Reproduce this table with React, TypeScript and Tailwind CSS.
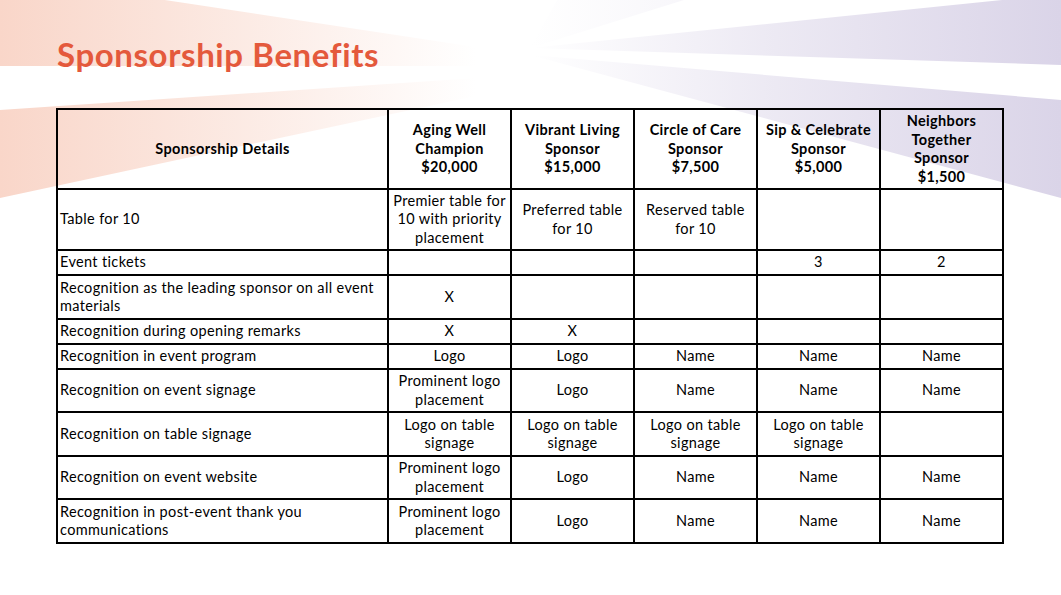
import React from "react";

type Row = {
  label: string;
  h: string;
  cells: string[][];
};

const rows: Row[] = [
  {
    label: "Table for 10",
    h: "h-[61px]",
    cells: [
      ["Premier table for", "10 with priority", "placement"],
      ["Preferred table", "for 10"],
      ["Reserved table", "for 10"],
      [],
      [],
    ],
  },
  { label: "Event tickets", h: "h-[25px]", cells: [[], [], [], ["3"], ["2"]] },
  {
    label: "Recognition as the leading sponsor on all event materials",
    h: "h-[44px]",
    cells: [["X"], [], [], [], []],
  },
  {
    label: "Recognition during opening remarks",
    h: "h-[25px]",
    cells: [["X"], ["X"], [], [], []],
  },
  {
    label: "Recognition in event program",
    h: "h-[25px]",
    cells: [["Logo"], ["Logo"], ["Name"], ["Name"], ["Name"]],
  },
  {
    label: "Recognition on event signage",
    h: "h-[43px]",
    cells: [["Prominent logo", "placement"], ["Logo"], ["Name"], ["Name"], ["Name"]],
  },
  {
    label: "Recognition on table signage",
    h: "h-[44px]",
    cells: [
      ["Logo on table", "signage"],
      ["Logo on table", "signage"],
      ["Logo on table", "signage"],
      ["Logo on table", "signage"],
      [],
    ],
  },
  {
    label: "Recognition on event website",
    h: "h-[43px]",
    cells: [["Prominent logo", "placement"], ["Logo"], ["Name"], ["Name"], ["Name"]],
  },
  {
    label: "Recognition in post-event thank you communications",
    h: "h-[44px]",
    cells: [["Prominent logo", "placement"], ["Logo"], ["Name"], ["Name"], ["Name"]],
  },
];

const tiers = [
  ["Aging Well", "Champion", "$20,000"],
  ["Vibrant Living", "Sponsor", "$15,000"],
  ["Circle of Care", "Sponsor", "$7,500"],
  ["Sip & Celebrate", "Sponsor", "$5,000"],
  ["Neighbors", "Together", "Sponsor", "$1,500"],
];

function Rays() {
  return (
    <svg
      className="absolute inset-0 w-full h-full"
      viewBox="0 0 1061 595"
      preserveAspectRatio="none"
    >
      <defs>
        <linearGradient id="orange" gradientUnits="userSpaceOnUse" x1="0" y1="0" x2="560" y2="0">
          <stop offset="0" stopColor="#f9d6c9" stopOpacity="1" />
          <stop offset="0.35" stopColor="#f9d6c9" stopOpacity="0.6" />
          <stop offset="0.85" stopColor="#f9d6c9" stopOpacity="0" />
        </linearGradient>
        <linearGradient id="purple" gradientUnits="userSpaceOnUse" x1="1061" y1="0" x2="530" y2="0">
          <stop offset="0" stopColor="#dad4e8" stopOpacity="1" />
          <stop offset="0.55" stopColor="#dad4e8" stopOpacity="0.5" />
          <stop offset="1" stopColor="#dad4e8" stopOpacity="0" />
        </linearGradient>
      </defs>
      <polygon points="0,-25 600,66 0,66" fill="url(#orange)" />
      <polygon points="0,110 597,70 0,198" fill="url(#orange)" />
      <polygon points="530,48 560,-5 700,-5" fill="url(#purple)" opacity="0.6" />
      <polygon points="530,48 1061,-6 1061,65" fill="url(#purple)" />
      <polygon points="530,55 1061,100 1061,198" fill="url(#purple)" />
    </svg>
  );
}

export default function App() {
  return (
    <div
      className="relative w-[1061px] h-[595px] overflow-hidden bg-white text-black"
      style={{ fontFamily: "Lato, 'Open Sans', sans-serif" }}
    >
      <Rays />
      <div className="relative flex flex-col pl-[57px] pt-[34px]">
        <h1 className="text-[33px] leading-[40px] font-bold tracking-[0.6px] text-[#e4593c]">
          Sponsorship Benefits
        </h1>

        <table className="mt-[34px] -ml-px w-[946px] table-fixed border-collapse text-[14.5px] leading-[18.5px] tracking-[0.35px]">
          <colgroup>
            <col className="w-[331px]" />
            <col className="w-[123px]" />
            <col className="w-[123px]" />
            <col className="w-[123px]" />
            <col className="w-[123px]" />
            <col className="w-[123px]" />
          </colgroup>
          <thead>
            <tr className="h-[80px]">
              <th className="border-2 border-black font-bold text-center align-middle">
                Sponsorship Details
              </th>
              {tiers.map((t, i) => (
                <th key={i} className="border-2 border-black font-bold text-center align-middle p-0">
                  {t.map((line, j) => (
                    <div key={j}>{line}</div>
                  ))}
                </th>
              ))}
            </tr>
          </thead>
          <tbody>
            {rows.map((r, i) => (
              <tr key={i} className={r.h}>
                <td className="border-2 border-black px-[2px] py-0 text-left align-middle">
                  {r.label}
                </td>
                {r.cells.map((c, j) => (
                  <td key={j} className="border-2 border-black p-0 text-center align-middle">
                    {c.map((line, k) => (
                      <div key={k}>{line}</div>
                    ))}
                  </td>
                ))}
              </tr>
            ))}
          </tbody>
        </table>
      </div>
    </div>
  );
}
